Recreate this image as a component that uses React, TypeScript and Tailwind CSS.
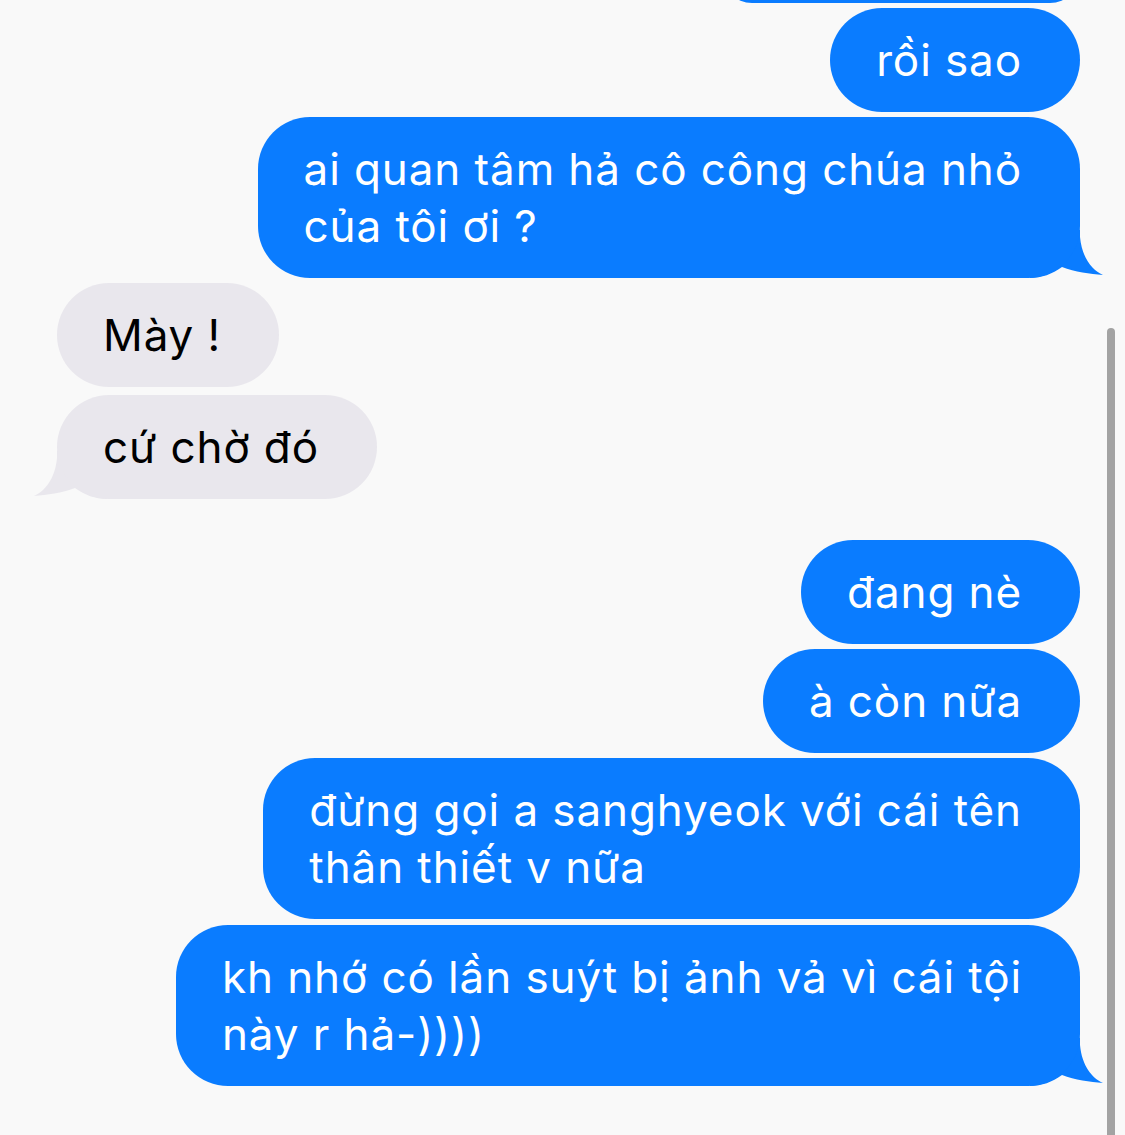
import React from "react";

const BLUE = "#0a7cff";
const GRAY = "#e9e7ed";

function TailRight() {
  return (
    <svg
      className="absolute right-[-25px] bottom-0"
      width="75"
      height="48"
      viewBox="0 0 75 48"
    >
      <path
        d="M50,0 L50,7 C52,28 62,40 73,45 C60,44 45,42 32,37 C22,44 12,48 0,48 L0,0 Z"
        fill={BLUE}
      />
    </svg>
  );
}

function TailLeft() {
  return (
    <svg
      className="absolute left-[-25px] bottom-0"
      width="75"
      height="48"
      viewBox="0 0 75 48"
    >
      <path
        d="M25,0 L25,7 C23,28 13,40 2,45 C15,44 30,42 43,37 C53,44 63,48 75,48 L75,0 Z"
        fill={GRAY}
      />
    </svg>
  );
}

function Blue({
  children,
  tail,
  className = "",
}: {
  children: React.ReactNode;
  tail?: boolean;
  className?: string;
}) {
  return (
    <div className={`relative self-end mr-[45px] ${className}`}>
      <div className="relative z-10 rounded-[52px] bg-[#0a7cff] pl-[46px] pr-[58px] pt-[24px] pb-[23px] text-white whitespace-nowrap">
        {children}
      </div>
      {tail && <TailRight />}
    </div>
  );
}

function Gray({
  children,
  tail,
  className = "",
}: {
  children: React.ReactNode;
  tail?: boolean;
  className?: string;
}) {
  return (
    <div className={`relative self-start ml-[57px] ${className}`}>
      <div className="relative z-10 rounded-[52px] bg-[#e9e7ed] pl-[46px] pr-[58px] pt-[24px] pb-[23px] text-black whitespace-nowrap">
        {children}
      </div>
      {tail && <TailLeft />}
    </div>
  );
}

export default function App() {
  return (
    <div
      className="relative w-[1125px] h-[1135px] overflow-hidden bg-[#f9f9f9] text-[44px] leading-[57px] tracking-[0.9px]"
      style={{ fontFamily: "Inter, 'Noto Sans', sans-serif" }}
    >
      <div className="flex flex-col">
        <div className="self-end mr-[45px] mt-[-57px] h-[60px] w-[358px] rounded-[52px] bg-[#0a7cff]" />
        <Blue className="mt-[5px]">rồi sao</Blue>
        <Blue className="mt-[5px]" tail>
          ai quan tâm hả cô công chúa nhỏ
          <br />
          của tôi ơi ?
        </Blue>
        <Gray className="mt-[5px]">Mày !</Gray>
        <Gray className="mt-[8px]" tail>
          cứ chờ đó
        </Gray>
        <Blue className="mt-[41px]">đang nè</Blue>
        <Blue className="mt-[5px]">à còn nữa</Blue>
        <Blue className="mt-[5px]">
          đừng gọi a sanghyeok với cái tên
          <br />
          thân thiết v nữa
        </Blue>
        <Blue className="mt-[6px]" tail>
          kh nhớ có lần suýt bị ảnh vả vì cái tội
          <br />
          này r hả-))))
        </Blue>
      </div>
      <div className="absolute left-[1107px] top-[328px] h-[900px] w-[8px] rounded-full bg-[#a3a3a3]" />
    </div>
  );
}
